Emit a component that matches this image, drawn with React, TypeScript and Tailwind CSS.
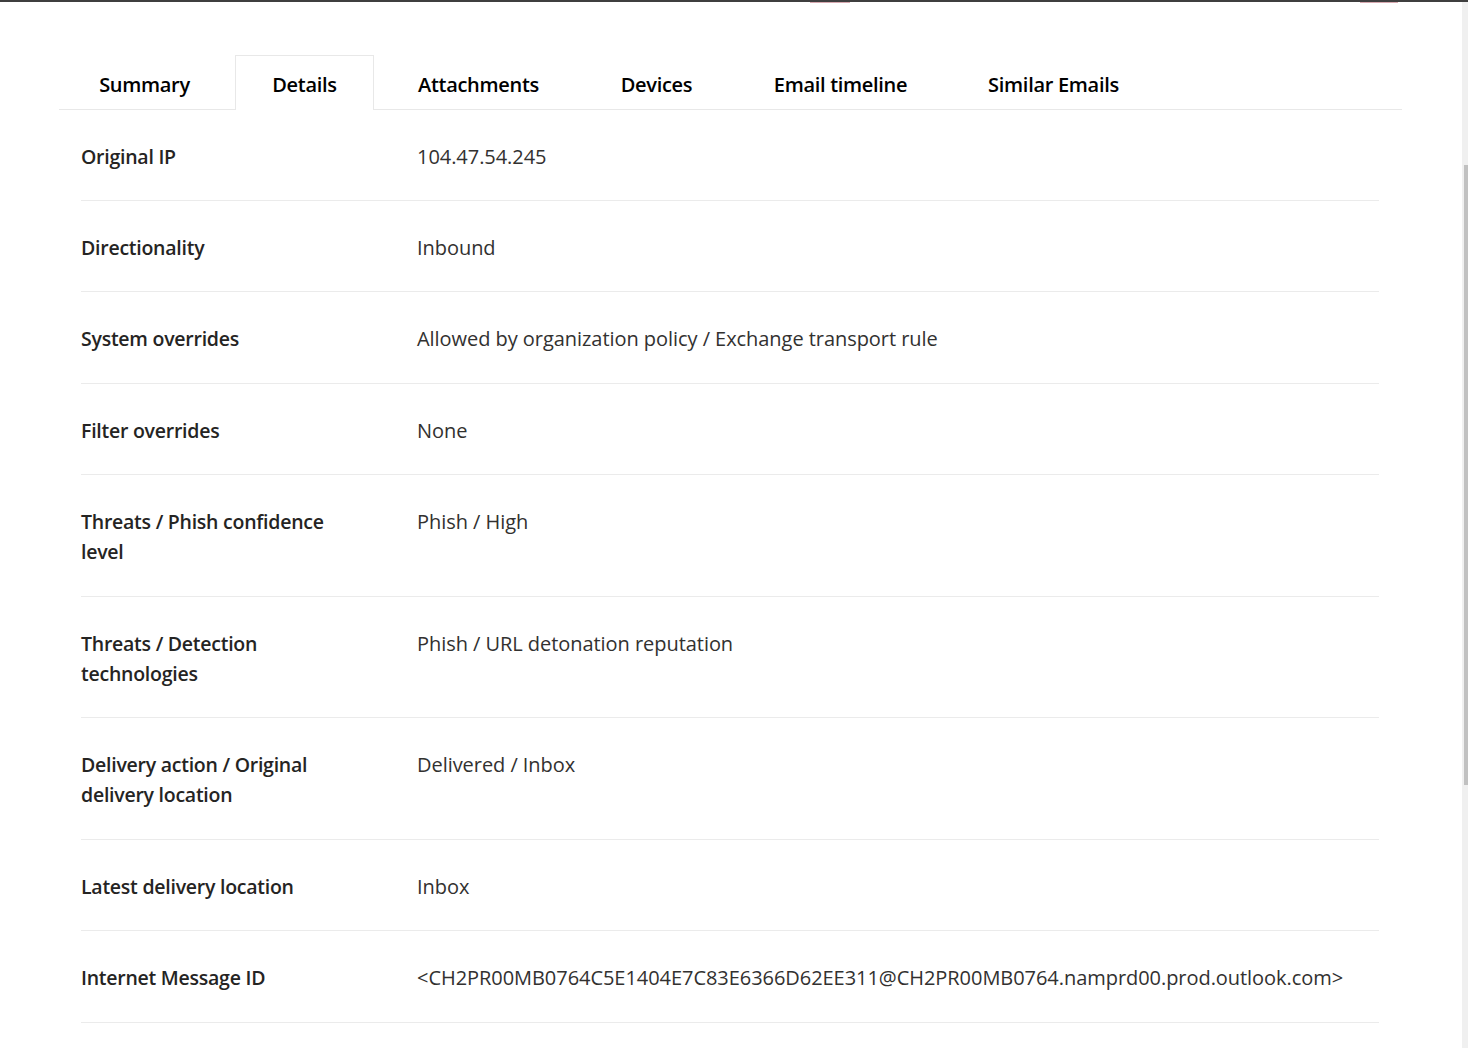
const TABS = [
  { label: 'Summary', w: 'w-[167px]' },
  { label: 'Details', w: 'w-[139px]', active: true },
  { label: 'Attachments', w: 'w-[195px]' },
  { label: 'Devices', w: 'w-[147px]' },
  { label: 'Email timeline', w: 'w-[207px]' },
  { label: 'Similar Emails', w: 'w-[205px]' },
];

const ROWS: { label: string[]; value: string }[] = [
  { label: ['Original IP'], value: '104.47.54.245' },
  { label: ['Directionality'], value: 'Inbound' },
  { label: ['System overrides'], value: 'Allowed by organization policy / Exchange transport rule' },
  { label: ['Filter overrides'], value: 'None' },
  { label: ['Threats / Phish confidence', 'level'], value: 'Phish / High' },
  { label: ['Threats / Detection', 'technologies'], value: 'Phish / URL detonation reputation' },
  { label: ['Delivery action / Original', 'delivery location'], value: 'Delivered / Inbox' },
  { label: ['Latest delivery location'], value: 'Inbox' },
  {
    label: ['Internet Message ID'],
    value: '<CH2PR00MB0764C5E1404E7C83E6366D62EE311@CH2PR00MB0764.namprd00.prod.outlook.com>',
  },
];

export default function App() {
  return (
    <div className="w-[1468px] h-[1048px] bg-white overflow-hidden flex flex-col font-['Open_Sans',_'Noto_Sans',_sans-serif] text-[#201f1e]">
      {/* window top edge */}
      <div className="relative h-[2px] bg-[#3f3f3f] shrink-0">
        <div className="absolute top-[2px] left-[810px] w-[40px] h-[1px] bg-[#d7a9b0]" />
        <div className="absolute top-[2px] left-[1360px] w-[38px] h-[1px] bg-[#d7a9b0]" />
      </div>

      <div className="flex flex-1 min-h-0">
        <div className="flex-1 pl-[59px] pr-[60px]">
          {/* tabs */}
          <div className="flex items-end gap-[7px] pl-[2px] pt-[52px] border-b border-[#e8e8e8]">
            {TABS.map((t) =>
              t.active ? (
                <div
                  key={t.label}
                  className={`${t.w} h-[55px] -mb-px flex items-center justify-center border border-b-0 border-[#e8e8e8] bg-white text-[20px] font-semibold text-black tracking-[-0.3px]`}
                >
                  <span className="pt-[3px]">{t.label}</span>
                </div>
              ) : (
                <div
                  key={t.label}
                  className={`${t.w} h-[55px] flex items-center justify-center text-[20px] font-semibold text-black tracking-[-0.3px]`}
                >
                  <span className="pt-[6px]">{t.label}</span>
                </div>
              )
            )}
          </div>

          {/* detail rows */}
          <div className="pl-[22px] pr-[23px]">
            {ROWS.map((r, i) => (
              <div
                key={r.label.join(' ')}
                className={`flex border-b border-[#ebebeb] pt-[32px] ${i === 0 ? 'pb-[27.5px]' : 'pb-[28.5px]'}`}
              >
                <div className="w-[336px] shrink-0 text-[19.5px] leading-[30px] font-semibold text-[#252423] tracking-[-0.25px]">
                  {r.label.map((l) => (
                    <div key={l}>{l}</div>
                  ))}
                </div>
                <div className="text-[20px] leading-[30px] text-[#323130] whitespace-nowrap tracking-[-0.05px]">
                  {r.value}
                </div>
              </div>
            ))}
          </div>
        </div>

        {/* scrollbar */}
        <div className="w-[6px] shrink-0 bg-[#f0f0f0] flex flex-col">
          <div className="h-[163px]" />
          <div className="h-[620px] ml-[2px] bg-[#c1c1c1]" />
        </div>
      </div>
    </div>
  );
}
